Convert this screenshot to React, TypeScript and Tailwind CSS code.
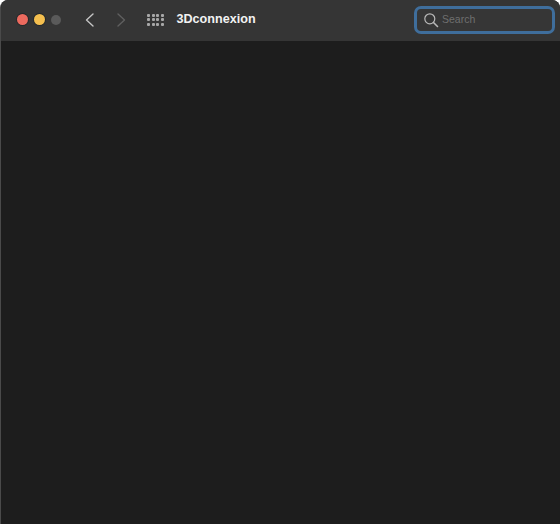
export default function App() {
  const dots = Array.from({ length: 12 });
  return (
    <div className="w-[560px] h-[524px] bg-[#1d1d1d] flex flex-col font-['Liberation_Sans',sans-serif] overflow-hidden rounded-tl-[8px] rounded-tr-[8px] border-l border-[#4a4a4a]">
      <header className="h-[41px] shrink-0 bg-[#353535] flex items-center pl-[16px] pr-[5px] pb-[2px]">
        <div className="flex items-center gap-[6px]">
          <span className="w-[11px] h-[11px] rounded-full bg-[#ec6a5e] ring-1 ring-[#23282b]" />
          <span className="w-[11px] h-[11px] rounded-full bg-[#f4bf4f] ring-1 ring-[#23282b]" />
          <span className="w-[10px] h-[10px] rounded-full bg-[#5a5a5a]" />
        </div>
        <svg className="ml-[23px]" width="12" height="16" viewBox="0 0 12 16" fill="none" stroke="#c4c4c4" strokeWidth="1.4" strokeLinecap="round" strokeLinejoin="round">
          <path d="M9 2 L2.5 8 L9 14" />
        </svg>
        <svg className="ml-[19px]" width="12" height="16" viewBox="0 0 12 16" fill="none" stroke="#5f5f5f" strokeWidth="1.4" strokeLinecap="round" strokeLinejoin="round">
          <path d="M3 2 L9.5 8 L3 14" />
        </svg>
        <div className="ml-[20px] grid grid-cols-4 gap-[1.5px]">
          {dots.map((_, i) => (
            <span key={i} className="w-[3px] h-[3px] rounded-[1px] bg-[#a8a8a8]" />
          ))}
        </div>
        <span className="ml-[13px] text-[12.6px] font-bold text-[#f2f2f2] leading-none">3Dconnexion</span>
        <div className="ml-auto w-[141px] h-[28px] rounded-[7px] border-[3px] border-[#3f6e9c] bg-[#363636] flex items-center pl-[6px]">
          <svg width="16" height="16" viewBox="0 0 16 16" fill="none" stroke="#b8b8b8" strokeWidth="1.2" strokeLinecap="round">
            <circle cx="6.8" cy="6.8" r="5" />
            <path d="M10.5 10.5 L14.5 14.5" strokeWidth="1.6" />
          </svg>
          <span className="ml-[3px] text-[10.5px] text-[#6f6f6f] leading-none">Search</span>
        </div>
      </header>
      <main className="flex-1 bg-[#1d1d1d]" />
    </div>
  );
}
